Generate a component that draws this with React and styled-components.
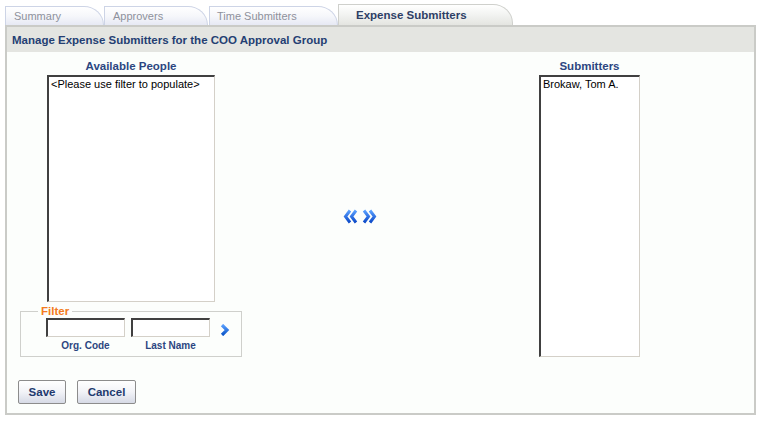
import { createGlobalStyle } from "styled-components";
import styled from "styled-components";

const GlobalStyle = createGlobalStyle`
  body {
    margin: 0;
    background: #ffffff;
    font-family: "Liberation Sans", Arial, sans-serif;
  }
`;

const Page = styled.div`
  padding: 4px 4px 0 5px;
  width: 751px;
`;

const TabRow = styled.div`
  display: flex;
  align-items: flex-end;
  height: 21px;
`;

const Tab = styled.div`
  box-sizing: border-box;
  width: ${(p) => p.$w}px;
  height: ${(p) => (p.$active ? 21 : 19)}px;
  margin-right: ${(p) => p.$gap || 0}px;
  padding-left: ${(p) => p.$pad}px;
  display: flex;
  align-items: center;
  font-size: ${(p) => (p.$active ? 11.5 : 11)}px;
  font-weight: ${(p) => (p.$active ? "bold" : "normal")};
  color: ${(p) => (p.$active ? "#2e3f66" : "#8e919c")};
  border: 1px solid ${(p) => (p.$active ? "#cfd0cc" : "#cdd4e6")};
  border-bottom: none;
  border-top-right-radius: 20px 19px;
  background: ${(p) =>
    p.$active
      ? "linear-gradient(#ffffff 0%, #f3f4f2 45%, #e4e5e1 100%)"
      : "linear-gradient(#ffffff 0%, #f6f7fb 50%, #e6e9f4 100%)"};
`;

const Panel = styled.div`
  border: 2px solid #cacbc7;
  background: #fcfefc;
  height: 386px;
  display: flex;
  flex-direction: column;
`;

const PanelHeader = styled.div`
  height: 25px;
  background: #e4e5e1;
  display: flex;
  align-items: center;
  padding-left: 5px;
  font-size: 11.5px;
  font-weight: bold;
  color: #253f73;
`;

const Body = styled.div`
  display: flex;
  padding: 8px 0 0 13px;
`;

const Column = styled.div`
  display: flex;
  flex-direction: column;
  width: ${(p) => p.$w}px;
`;

const ColTitle = styled.div`
  font-size: 11.5px;
  font-weight: bold;
  color: #2c4681;
  text-align: center;
  height: 15px;
  line-height: 12px;
  width: ${(p) => (p.$w ? `${p.$w}px` : "auto")};
`;

const ListBox = styled.div`
  box-sizing: border-box;
  width: ${(p) => p.$w}px;
  height: ${(p) => p.$h}px;
  margin-left: ${(p) => p.$indent || 0}px;
  background: #ffffff;
  border-top: 2px solid #404040;
  border-left: 2px solid #404040;
  border-right: 1px solid #d4d0c8;
  border-bottom: 1px solid #d4d0c8;
  padding: 1px 2px;
  font-size: 11px;
  color: #000;
  line-height: 13px;
`;

const Filter = styled.fieldset`
  box-sizing: border-box;
  margin: 3px 0 0 0;
  padding: 0 0 0 25px;
  width: 222px;
  height: 52px;
  border: 1px solid #cfd0cc;
  border-radius: 0;
`;

const Legend = styled.legend`
  color: #f47b20;
  font-weight: bold;
  font-size: 11.5px;
  padding: 0 3px;
  margin-left: -8px;
  line-height: 12px;
`;

const FilterRow = styled.div`
  display: flex;
  gap: 6px;
  align-items: flex-start;
  margin-top: 1px;
`;

const FieldCell = styled.div`
  display: flex;
  flex-direction: column;
  align-items: center;
  gap: 3px;
`;

const TextBox = styled.input`
  box-sizing: border-box;
  width: 79px;
  height: 19px;
  margin: 0;
  background: #fff;
  border-top: 2px solid #404040;
  border-left: 2px solid #404040;
  border-right: 1px solid #d4d0c8;
  border-bottom: 1px solid #d4d0c8;
  outline: none;
`;

const FieldLabel = styled.span`
  font-size: 10px;
  font-weight: bold;
  color: #2c4681;
`;

const GoButton = styled.div`
  margin: 4px 0 0 4px;
  width: 10px;
  height: 12px;
`;

const Middle = styled.div`
  flex: 1;
  display: flex;
  align-items: center;
  padding: 15px 0 0 101px;
`;

const Arrows = styled.div`
  display: flex;
  gap: 4px;
  height: 282px;
  align-items: center;
`;

const Actions = styled.div`
  display: flex;
  gap: 11px;
  padding: 23px 0 0 11px;
`;

const Button = styled.button`
  box-sizing: border-box;
  height: 24px;
  width: ${(p) => p.$w}px;
  padding: 0;
  border: 1px solid #8c8c8c;
  border-radius: 2px;
  background: linear-gradient(#ffffff 0%, #f2f3f7 50%, #d6dae6 100%);
  font-family: "Liberation Sans", Arial, sans-serif;
  font-size: 11.5px;
  font-weight: bold;
  color: #223a6e;
`;

const Chevron = ({ dir }) => (
  <svg width="15" height="15" viewBox="0 0 15 15">
    <defs>
      <linearGradient id={`g${dir}`} x1="0" y1="0" x2="0" y2="1">
        <stop offset="0" stopColor="#5aa0ff" />
        <stop offset="1" stopColor="#0a48c8" />
      </linearGradient>
    </defs>
    <g
      transform={dir === "left" ? "" : "translate(15 0) scale(-1 1)"}
      fill="none"
      stroke={`url(#g${dir})`}
      strokeWidth="3"
      strokeLinejoin="miter"
    >
      <polyline points="7,1.5 2.5,7.5 7,13.5" />
      <polyline points="13,1.5 8.5,7.5 13,13.5" />
    </g>
  </svg>
);

const SingleChevron = () => (
  <svg width="10" height="12" viewBox="0 0 10 12">
    <defs>
      <linearGradient id="gs" x1="0" y1="0" x2="0" y2="1">
        <stop offset="0" stopColor="#5aa0ff" />
        <stop offset="1" stopColor="#0a55c8" />
      </linearGradient>
    </defs>
    <polyline
      points="2,1 7,6 2,11"
      fill="none"
      stroke="url(#gs)"
      strokeWidth="3.2"
    />
  </svg>
);

const App = () => {
  return (
    <Page>
      <GlobalStyle />
      <TabRow>
        <Tab $w={99} $pad={8}>Summary</Tab>
        <Tab $w={104} $pad={8} $gap={1}>Approvers</Tab>
        <Tab $w={129} $pad={7}>Time Submitters</Tab>
        <Tab $w={175} $pad={17} $active>
          Expense Submitters
        </Tab>
      </TabRow>
      <Panel>
        <PanelHeader>Manage Expense Submitters for the COO Approval Group</PanelHeader>
        <Body>
          <Column $w={222}>
            <ColTitle>Available People</ColTitle>
            <ListBox $w={168} $h={227} $indent={27}>
              &lt;Please use filter to populate&gt;
            </ListBox>
            <Filter>
              <Legend>Filter</Legend>
              <FilterRow>
                <FieldCell>
                  <TextBox type="text" />
                  <FieldLabel>Org. Code</FieldLabel>
                </FieldCell>
                <FieldCell>
                  <TextBox type="text" />
                  <FieldLabel>Last Name</FieldLabel>
                </FieldCell>
                <GoButton>
                  <SingleChevron />
                </GoButton>
              </FilterRow>
            </Filter>
          </Column>
          <Middle>
            <Arrows>
              <Chevron dir="left" />
              <Chevron dir="right" />
            </Arrows>
          </Middle>
          <Column $w={215}>
            <ColTitle $w={101}>Submitters</ColTitle>
            <ListBox $w={101} $h={282}>
              Brokaw, Tom A.
            </ListBox>
          </Column>
        </Body>
        <Actions>
          <Button $w={48}>Save</Button>
          <Button $w={59}>Cancel</Button>
        </Actions>
      </Panel>
    </Page>
  );
};

export default App;
